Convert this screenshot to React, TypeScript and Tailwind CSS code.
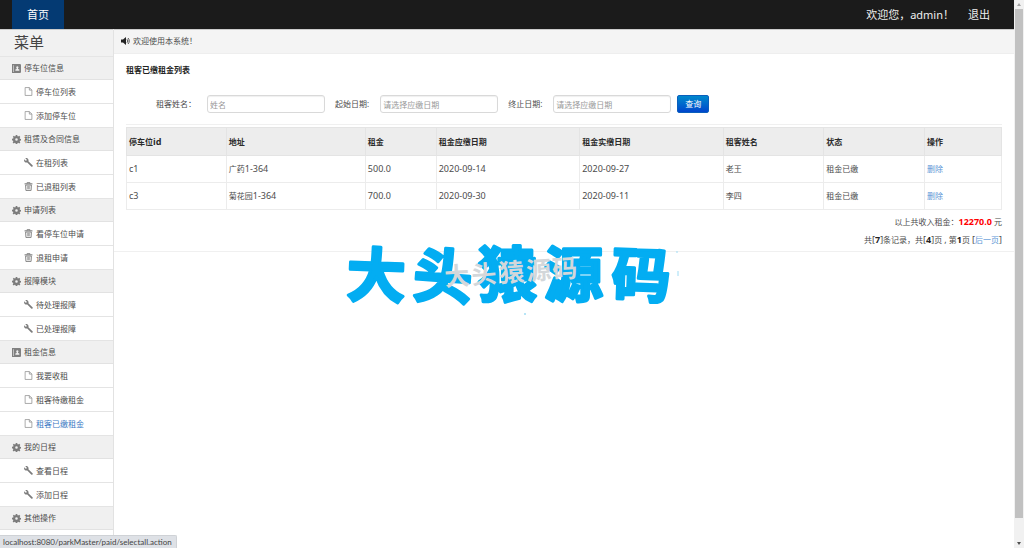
import React from "react";

type IconName = "book" | "cog" | "file" | "wrench" | "trash";

function Icon({ name }: { name: IconName }) {
  const common = { viewBox: "0 0 16 16", className: "size-[9px] shrink-0", "aria-hidden": true } as const;
  switch (name) {
    case "book":
      return (
        <svg {...common} fill="#808080">
          <path
            fillRule="evenodd"
            d="M0 0h14a2 2 0 0 1 2 2v12a2 2 0 0 1-2 2H0zM2.500 2v12h1V2zM9.500 4a2 2 0 0 0-1.200 3.600V8.800L6 9.800V12h7V9.800L10.700 8.800V7.600A2 2 0 0 0 9.500 4z"
          />
        </svg>
      );
    case "cog":
      return (
        <svg {...common} fill="#7c7c7c">
          <path
            fillRule="evenodd"
            d="M6.700 0h2.600l.5 2.200 1.200.5 1.900-1.200 1.900 1.900-1.200 1.900.5 1.200 2.200.5v2.600l-2.200.5-.5 1.200 1.200 1.900-1.900 1.900-1.900-1.200-1.200.5-.5 2.200H6.700l-.5-2.200-1.200-.5-1.900 1.200-1.900-1.900 1.200-1.900-.5-1.200L0 9.300V6.700l2.200-.5.5-1.200-1.200-1.900 1.900-1.900L5 2.700l1.200-.5zM8 5.700a2.300 2.300 0 1 0 0 4.600 2.300 2.300 0 0 0 0-4.600z"
          />
        </svg>
      );
    case "file":
      return (
        <svg {...common} fill="none" stroke="#8c8c8c" strokeWidth="1.3">
          <path d="M2 1h7.500L14 5.500V15H2z" />
          <path d="M9.500 1v4.500H14" />
        </svg>
      );
    case "wrench":
      return (
        <svg {...common} fill="#7c7c7c">
          <path d="M2.300.4 5 3l-.4 1.600L3 5 .4 2.300C-.4 4.800.8 7.200 3 7.900c1 .3 2 .2 2.800-.1l7 7.300a1.600 1.600 0 0 0 2.300-2.300l-7.300-7C8.100 5 8.200 4 7.900 3 7.200.8 4.800-.4 2.300.4z" />
        </svg>
      );
    case "trash":
      return (
        <svg {...common} fill="none" stroke="#7c7c7c">
          <path d="M1 3.300h14" strokeWidth="2" />
          <path d="M5.500 3V1h5v2" strokeWidth="1.500" />
          <path d="M2.800 5.500h10.400L12.600 15H3.400z" strokeWidth="1.600" />
          <path d="M6 7v6M8 7v6M10 7v6" strokeWidth="1.100" />
        </svg>
      );
  }
}

type Item = { icon: IconName; label: string; active?: boolean };
type Group = { icon: IconName; title: string; items: Item[] };

const menu: Group[] = [
  { icon: "book", title: "停车位信息", items: [{ icon: "file", label: "停车位列表" }, { icon: "file", label: "添加停车位" }] },
  { icon: "cog", title: "租赁及合同信息", items: [{ icon: "wrench", label: "在租列表" }, { icon: "trash", label: "已退租列表" }] },
  { icon: "cog", title: "申请列表", items: [{ icon: "trash", label: "看停车位申请" }, { icon: "trash", label: "退租申请" }] },
  { icon: "cog", title: "报障模块", items: [{ icon: "wrench", label: "待处理报障" }, { icon: "wrench", label: "已处理报障" }] },
  {
    icon: "book",
    title: "租金信息",
    items: [
      { icon: "file", label: "我要收租" },
      { icon: "file", label: "租客待缴租金" },
      { icon: "file", label: "租客已缴租金", active: true },
    ],
  },
  { icon: "cog", title: "我的日程", items: [{ icon: "wrench", label: "查看日程" }, { icon: "wrench", label: "添加日程" }] },
  { icon: "cog", title: "其他操作", items: [] },
];

const columns = [
  { title: "停车位id", width: "w-[11.4%]" },
  { title: "地址", width: "w-[15.9%]" },
  { title: "租金", width: "w-[8.1%]" },
  { title: "租金应缴日期", width: "w-[16.4%]" },
  { title: "租金实缴日期", width: "w-[16.4%]" },
  { title: "租客姓名", width: "w-[11.5%]" },
  { title: "状态", width: "w-[11.5%]" },
  { title: "操作", width: "w-[8.8%]" },
];

const rows = [
  ["c1", "广药1-364", "500.0", "2020-09-14", "2020-09-27", "老王", "租金已缴"],
  ["c3", "菊花园1-364", "700.0", "2020-09-30", "2020-09-11", "李四", "租金已缴"],
];

/* Latin letters and digits are set one step larger than the Chinese text around them. */
function Mixed({ text }: { text: string }) {
  return (
    <>
      {text.split(/([\x21-\x7e]+)/).map((part, i) =>
        i % 2 ? (
          <span key={i} className="text-[9px]">
            {part}
          </span>
        ) : (
          part
        ),
      )}
    </>
  );
}

function Field({ id, label, placeholder }: { id: string; label: string; placeholder: string }) {
  return (
    <div className="flex items-center gap-[11px]">
      <label htmlFor={id} className="whitespace-nowrap">
        {label}
      </label>
      <input
        id={id}
        type="text"
        placeholder={placeholder}
        className="h-[18px] w-[118px] rounded-[3px] border border-[#d9d9d9] bg-white px-[2px] text-[8px] shadow-[inset_0_1px_1px_#f0f0f0] outline-none placeholder:text-[#999]"
      />
    </div>
  );
}

export default function App() {
  return (
    <div className="flex h-screen overflow-hidden bg-white font-['Noto_Sans','Noto_Sans_CJK_SC',sans-serif] text-[8px] leading-3 text-[#4c4c4c]">
      <div className="flex min-w-0 flex-1 flex-col">
        <header className="flex h-[29px] shrink-0 items-stretch justify-between bg-[#1b1b1b] pr-6 pl-3 text-[11px] text-[#eee]">
          <a href="#home" className="flex w-[52px] items-center justify-center bg-[#043a73] text-white">
            首页
          </a>
          <div className="flex items-center gap-[14px]">
            <span>欢迎您，admin！</span>
            <a href="#logout">退出</a>
          </div>
        </header>

        <div className="flex min-h-0 flex-1">
          <nav className="w-[114px] shrink-0 overflow-hidden border-r border-[#e2e2e2]" aria-label="菜单">
            <h2 className="flex h-7 items-center border-t border-b border-t-[#ccc] border-b-[#e5e5e5] bg-[#f1f1f1] pb-[2px] pl-[14px] text-[15px] text-[#444]">
              菜单
            </h2>
            {menu.map((group) => (
              <section key={group.title}>
                <h3 className="flex h-[23px] items-center gap-[3px] border-b border-[#e2e2e2] bg-[#f0f0f0] pl-3">
                  <Icon name={group.icon} />
                  {group.title}
                </h3>
                <ul>
                  {group.items.map((item) => (
                    <li key={item.label} className="h-6 border-b border-[#e4e4e4]">
                      <a
                        href="#menu"
                        className={
                          item.active
                            ? "flex h-full items-center gap-[3px] pl-6 text-[#3a78c3]"
                            : "flex h-full items-center gap-[3px] pl-6"
                        }
                      >
                        <Icon name={item.icon} />
                        {item.label}
                      </a>
                    </li>
                  ))}
                </ul>
              </section>
            ))}
          </nav>

          <main className="min-w-0 flex-1">
            <div className="flex h-[25px] items-center gap-[3px] border-t border-b border-t-[#ccc] border-b-[#eee] bg-[#f4f4f4] pb-[2px] pl-[7px]">
              <svg viewBox="0 0 18 16" className="h-2 w-[9px]" aria-hidden>
                <path d="M0 5h4l6-5v16l-6-5H0z" fill="#222" />
                <path d="M12 4.500a5 5 0 0 1 0 7M14 2a8.500 8.500 0 0 1 0 12" fill="none" stroke="#444" strokeWidth="1.800" />
              </svg>
              欢迎使用本系统！
            </div>

            <div className="relative border-b border-[#f0f0f0] px-3 pb-[5px]">
              <h1 className="pt-[10px] font-bold text-[#222]">租客已缴租金列表</h1>

              <form
                className="flex items-center gap-[10px] border-b border-[#f0f0f0] pt-[19px] pb-[11px] pl-[30px]"
                onSubmit={(e) => e.preventDefault()}
              >
                <Field id="tenant" label="租客姓名：" placeholder="姓名" />
                <Field id="from" label="起始日期:" placeholder="请选择应缴日期" />
                <Field id="to" label="终止日期:" placeholder="请选择应缴日期" />
                <button
                  type="submit"
                  className="-ml-1 h-[18px] w-8 rounded-[2px] border border-[#0a5fbd] bg-linear-to-b from-[#0088cc] to-[#0044cc] text-[8px] text-white"
                >
                  查询
                </button>
              </form>

              <table className="mt-[2px] w-full table-fixed border-collapse border border-[#e8e8e8]">
                <thead>
                  <tr className="h-7 bg-[#ededed] text-[#2b2b2b]">
                    {columns.map((c) => (
                      <th key={c.title} className={`${c.width} border border-[#e4e4e4] px-[2px] text-left font-bold`}>
                        <Mixed text={c.title} />
                      </th>
                    ))}
                  </tr>
                </thead>
                <tbody>
                  {rows.map((r) => (
                    <tr key={r[0]} className="h-[27px]">
                      {r.map((cell, i) => (
                        <td key={i} className="border border-[#ececec] px-[2px]">
                          <Mixed text={cell} />
                        </td>
                      ))}
                      <td className="border border-[#ececec] px-[2px]">
                        <a href="#delete" className="text-[#5c96d6]">
                          删除
                        </a>
                      </td>
                    </tr>
                  ))}
                </tbody>
              </table>

              <p className="mt-[6px] text-right">
                以上共收入租金：<b className="text-[9px] text-[#ff0000]">12270.0</b> 元
              </p>
              <p className="mt-[6px] text-right">
                共<Mixed text="[" />
                <b className="text-[9px] text-[#222]">7</b>
                <Mixed text="]条记录，共[" />
                <b className="text-[9px] text-[#222]">4</b>
                <Mixed text="]页 , 第" />
                <b className="text-[9px] text-[#222]">1</b>
                <Mixed text="页 [" />
                <a href="#next" className="text-[#5c96d6]">
                  后一页
                </a>
                <Mixed text="]" />
              </p>

              <svg
                viewBox="0 0 360 130"
                className="pointer-events-none absolute top-[161px] left-[226px] h-[130px] w-[360px] overflow-visible font-['Noto_Sans_CJK_SC',sans-serif]"
              >
                <text
                  x="6 72 138 204 271"
                  y="81"
                  rotate="2 4 0 0 2"
                  fontSize="59"
                  fontWeight="700"
                  fill="#03adf2"
                  stroke="#03adf2"
                  strokeWidth="3"
                  strokeLinejoin="round"
                >
                  大头猿源码
                </text>
                <text
                  x="105 132 160 187 213"
                  y="71"
                  transform="rotate(-4 106 71)"
                  fontSize="25"
                  fontWeight="700"
                  fill="#d3d7da"
                >
                  大头猿源码
                </text>
                <circle cx="185" cy="99" r="1" fill="#9fdcf5" />
                <path d="M337 36v2M338 56v5" stroke="#9fdcf5" />
              </svg>
            </div>
          </main>
        </div>
      </div>

      <div className="flex w-[10px] shrink-0 flex-col items-center bg-[#f1f1f1]" aria-hidden>
        <svg viewBox="0 0 10 9" className="h-[9px] w-[10px]">
          <path d="M3 6l2-3 2 3z" fill="#a3a3a3" />
        </svg>
        <div className="w-2 flex-1 bg-[#c1c1c1]" />
        <svg viewBox="0 0 10 30" className="h-[30px] w-[10px]">
          <path d="M3 24h4l-2 3z" fill="#505050" />
        </svg>
      </div>

      <div className="fixed bottom-0 left-0 h-[13px] rounded-tr-[2px] border-t border-r border-[#cfd2d6] bg-[#dee1e6] pr-1 pl-[3px] font-[Lato,sans-serif] text-[8px] text-[#444]">
        localhost:8080/parkMaster/paid/selectall.action
      </div>
    </div>
  );
}
